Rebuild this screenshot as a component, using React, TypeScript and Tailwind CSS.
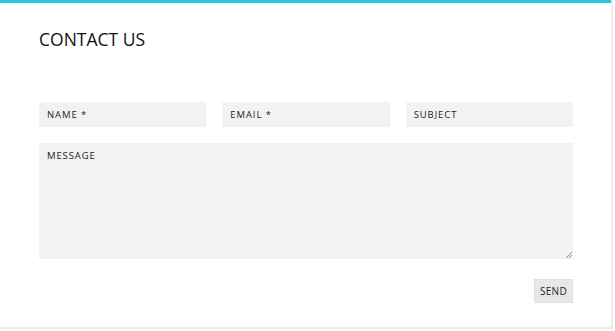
import React from "react";

export default function App() {
  const font = { fontFamily: '"Open Sans", sans-serif' };
  return (
    <div className="w-[615px] h-[331px] bg-white" style={font}>
      <div className="w-[613px] h-[329px] bg-white border-r-2 border-b-2 border-[#ececec] flex flex-col">
        <div className="h-[3px] bg-[#29c5da]" />
        <div className="pl-[39px] pr-[38px] pt-[24px] flex flex-col">
          <h1 className="text-[17.5px] leading-[24px] text-[#111]">CONTACT US</h1>
          <div className="mt-[51px] grid grid-cols-3 gap-x-[16px]">
            <div className="h-[25px] bg-[#f2f2f2] pl-[8px] pt-[2px] flex items-center text-[9.5px] tracking-[0.9px] text-[#222]">NAME *</div>
            <div className="h-[25px] bg-[#f2f2f2] pl-[8px] pt-[2px] flex items-center text-[9.5px] tracking-[0.9px] text-[#222]">EMAIL *</div>
            <div className="h-[25px] bg-[#f2f2f2] pl-[8px] pt-[2px] flex items-center text-[9.5px] tracking-[0.9px] text-[#222]">SUBJECT</div>
          </div>
          <div className="mt-[16px] h-[116px] bg-[#f2f2f2] relative pl-[8px] pt-[6px] text-[9.5px] tracking-[0.9px] text-[#222]">
            MESSAGE
            <svg className="absolute right-[1px] bottom-[1px]" width="7" height="7" viewBox="0 0 7 7">
              <line x1="1" y1="7" x2="7" y2="1" stroke="#777" strokeWidth="0.8" />
              <line x1="4" y1="7" x2="7" y2="4" stroke="#777" strokeWidth="0.8" />
            </svg>
          </div>
          <div className="mt-[20px] flex justify-end">
            <div className="w-[39px] h-[24px] bg-[#e8e8e8] border border-[#e0e0e0] flex items-center justify-center text-[10px] text-[#222] tracking-[0.3px]">SEND</div>
          </div>
        </div>
      </div>
    </div>
  );
}
